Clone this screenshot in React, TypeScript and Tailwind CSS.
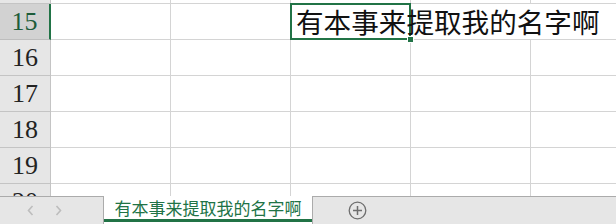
const GRID = "#d4d4d4";
const HEAD_LINE = "#c4c4c4";
const GREEN = "#217346";

const CJK = { fontFamily: '"Noto Sans CJK SC", "Noto Sans", sans-serif' };
const SERIF = { fontFamily: '"Liberation Serif", "Noto Sans CJK SC", serif' };

const rows = [15, 16, 17, 18, 19, 20];

function RowHeader({ n, active }: { n?: number; active?: boolean }) {
  return (
    <div
      style={SERIF}
      className={
        "flex w-[51px] shrink-0 items-center justify-center border-b text-[26px] leading-none " +
        (active
          ? "border-b-[#bdbdbd] border-r-2 border-r-[#217346] bg-[#d2d2d2] text-[#1d5c3a]"
          : "border-b-[#c4c4c4] border-r border-r-[#c4c4c4] bg-[#e6e6e6] text-[#222]")
      }
    >
      {n}
    </div>
  );
}

function Cell() {
  return <div className="w-[120px] shrink-0 border-b border-r border-[#d4d4d4]" />;
}

function SheetRow({ n }: { n: number }) {
  const active = n === 15;
  return (
    <div className="flex h-9 shrink-0">
      <RowHeader n={n} active={active} />
      <Cell />
      <Cell />
      {active ? (
        <>
          <div
            style={CJK}
            className="relative flex w-[120px] shrink-0 items-center whitespace-nowrap border-b border-r border-[#d4d4d4] pl-[5px] text-[27.6px] leading-none text-[#111]"
          >
            <div className="absolute -bottom-px -left-px -right-px -top-px border-2 border-[#217346]" />
            <div className="absolute -bottom-[4px] -right-[4px] h-[7px] w-[7px] border border-white bg-[#217346]" />
            <span className="relative">有本事来提取我的名字啊</span>
          </div>
          <div className="w-[120px] shrink-0 border-b border-[#d4d4d4]" />
          <div className="w-[120px] shrink-0 border-b border-[#d4d4d4]" />
        </>
      ) : (
        <>
          <Cell />
          <Cell />
          <Cell />
        </>
      )}
    </div>
  );
}

function Chevron({ dir }: { dir: "left" | "right" }) {
  return (
    <svg width="7" height="11" viewBox="0 0 7 11" fill="none">
      <path
        d={dir === "left" ? "M5.5 1 L1.5 5.5 L5.5 10" : "M1.5 1 L5.5 5.5 L1.5 10"}
        stroke="#bdbdbd"
        strokeWidth="1.6"
      />
    </svg>
  );
}

export default function App() {
  return (
    <div className="flex h-[224px] w-[616px] flex-col overflow-hidden bg-white">
      {/* Sheet grid */}
      <div className="flex h-[196px] shrink-0 flex-col overflow-hidden">
        <div className="flex h-[4px] shrink-0">
          <div className="w-[51px] shrink-0 border-b border-r border-[#c4c4c4] bg-[#e6e6e6]" />
          <Cell />
          <Cell />
          <Cell />
          <Cell />
          <Cell />
        </div>
        {rows.map((n) => (
          <SheetRow key={n} n={n} />
        ))}
      </div>

      {/* Sheet tabs */}
      <div className="flex h-[28px] shrink-0 border-t border-[#ababab] bg-[#e6e6e6]">
        <div className="flex w-[103px] shrink-0 items-center gap-[21px] pl-[27px]">
          <Chevron dir="left" />
          <Chevron dir="right" />
        </div>
        <div className="-mt-px flex w-[210px] shrink-0 flex-col border-x border-[#ababab] bg-white">
          <div
            style={CJK}
            className="flex flex-1 items-center justify-center text-[17px] leading-none text-[#217346]"
          >
            有本事来提取我的名字啊
          </div>
          <div className="mb-[2px] h-[3px] bg-[#217346]" />
        </div>
        <div className="flex w-[88px] shrink-0 items-center justify-center">
          <svg width="19" height="19" viewBox="0 0 19 19" fill="none">
            <circle cx="9.5" cy="9.5" r="8.3" stroke="#6e6e6e" strokeWidth="1.3" />
            <path d="M9.5 5 V14 M5 9.5 H14" stroke="#6e6e6e" strokeWidth="1.5" />
          </svg>
        </div>
      </div>
    </div>
  );
}
